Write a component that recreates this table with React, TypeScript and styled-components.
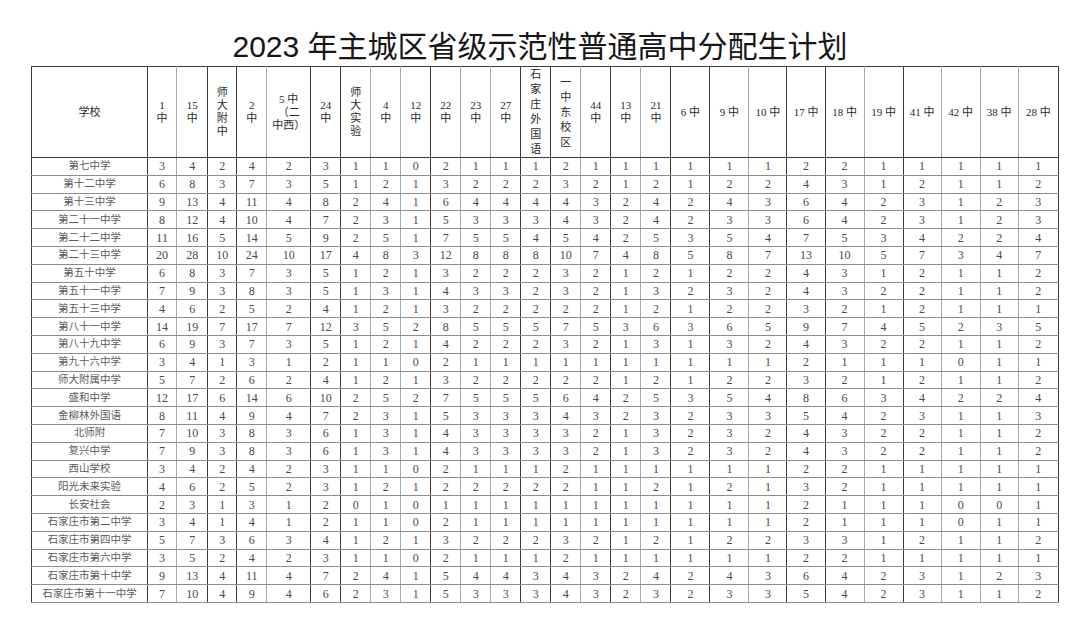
import React from "react";
import styled, { createGlobalStyle } from "styled-components";

type Tone = "dark" | "light";

interface Column {
    label: string[];
    width: number;
    edge: Tone;
    lineHeight?: number;
}

const columns: Column[] = [
    { label: ["学校"], width: 116, edge: "dark" },
    { label: ["1", "中"], width: 29, edge: "light" },
    { label: ["15", "中"], width: 31, edge: "dark" },
    { label: ["师", "大", "附", "中"], width: 29, edge: "dark" },
    { label: ["2", "中"], width: 30, edge: "light" },
    { label: ["5 中", "（二", "中西）"], width: 44, edge: "dark" },
    { label: ["24", "中"], width: 30, edge: "dark" },
    { label: ["师", "大", "实", "验"], width: 30, edge: "light" },
    { label: ["4", "中"], width: 30, edge: "light" },
    { label: ["12", "中"], width: 30, edge: "dark" },
    { label: ["22", "中"], width: 30, edge: "light" },
    { label: ["23", "中"], width: 30, edge: "light" },
    { label: ["27", "中"], width: 30, edge: "dark" },
    { label: ["石", "家", "庄", "外", "国", "语"], width: 30, edge: "dark", lineHeight: 15 },
    { label: ["一", "中", "东", "校", "区"], width: 30, edge: "light", lineHeight: 15 },
    { label: ["44", "中"], width: 30, edge: "dark" },
    { label: ["13", "中"], width: 30, edge: "light" },
    { label: ["21", "中"], width: 30, edge: "dark" },
    { label: ["6 中"], width: 39, edge: "dark" },
    { label: ["9 中"], width: 39, edge: "light" },
    { label: ["10 中"], width: 38, edge: "dark" },
    { label: ["17 中"], width: 38, edge: "dark" },
    { label: ["18 中"], width: 39, edge: "light" },
    { label: ["19 中"], width: 39, edge: "dark" },
    { label: ["41 中"], width: 38, edge: "light" },
    { label: ["42 中"], width: 39, edge: "light" },
    { label: ["38 中"], width: 38, edge: "light" },
    { label: ["28 中"], width: 40, edge: "dark" },
];

const rows: [string, number[]][] = [
    ["第七中学", [3, 4, 2, 4, 2, 3, 1, 1, 0, 2, 1, 1, 1, 2, 1, 1, 1, 1, 1, 1, 2, 2, 1, 1, 1, 1, 1]],
    ["第十二中学", [6, 8, 3, 7, 3, 5, 1, 2, 1, 3, 2, 2, 2, 3, 2, 1, 2, 1, 2, 2, 4, 3, 1, 2, 1, 1, 2]],
    ["第十三中学", [9, 13, 4, 11, 4, 8, 2, 4, 1, 6, 4, 4, 4, 4, 3, 2, 4, 2, 4, 3, 6, 4, 2, 3, 1, 2, 3]],
    ["第二十一中学", [8, 12, 4, 10, 4, 7, 2, 3, 1, 5, 3, 3, 3, 4, 3, 2, 4, 2, 3, 3, 6, 4, 2, 3, 1, 2, 3]],
    ["第二十二中学", [11, 16, 5, 14, 5, 9, 2, 5, 1, 7, 5, 5, 4, 5, 4, 2, 5, 3, 5, 4, 7, 5, 3, 4, 2, 2, 4]],
    ["第二十三中学", [20, 28, 10, 24, 10, 17, 4, 8, 3, 12, 8, 8, 8, 10, 7, 4, 8, 5, 8, 7, 13, 10, 5, 7, 3, 4, 7]],
    ["第五十中学", [6, 8, 3, 7, 3, 5, 1, 2, 1, 3, 2, 2, 2, 3, 2, 1, 2, 1, 2, 2, 4, 3, 1, 2, 1, 1, 2]],
    ["第五十一中学", [7, 9, 3, 8, 3, 5, 1, 3, 1, 4, 3, 3, 2, 3, 2, 1, 3, 2, 3, 2, 4, 3, 2, 2, 1, 1, 2]],
    ["第五十三中学", [4, 6, 2, 5, 2, 4, 1, 2, 1, 3, 2, 2, 2, 2, 2, 1, 2, 1, 2, 2, 3, 2, 1, 2, 1, 1, 1]],
    ["第八十一中学", [14, 19, 7, 17, 7, 12, 3, 5, 2, 8, 5, 5, 5, 7, 5, 3, 6, 3, 6, 5, 9, 7, 4, 5, 2, 3, 5]],
    ["第八十九中学", [6, 9, 3, 7, 3, 5, 1, 2, 1, 4, 2, 2, 2, 3, 2, 1, 3, 1, 3, 2, 4, 3, 2, 2, 1, 1, 2]],
    ["第九十六中学", [3, 4, 1, 3, 1, 2, 1, 1, 0, 2, 1, 1, 1, 1, 1, 1, 1, 1, 1, 1, 2, 1, 1, 1, 0, 1, 1]],
    ["师大附属中学", [5, 7, 2, 6, 2, 4, 1, 2, 1, 3, 2, 2, 2, 2, 2, 1, 2, 1, 2, 2, 3, 2, 1, 2, 1, 1, 2]],
    ["盛和中学", [12, 17, 6, 14, 6, 10, 2, 5, 2, 7, 5, 5, 5, 6, 4, 2, 5, 3, 5, 4, 8, 6, 3, 4, 2, 2, 4]],
    ["金柳林外国语", [8, 11, 4, 9, 4, 7, 2, 3, 1, 5, 3, 3, 3, 4, 3, 2, 3, 2, 3, 3, 5, 4, 2, 3, 1, 1, 3]],
    ["北师附", [7, 10, 3, 8, 3, 6, 1, 3, 1, 4, 3, 3, 3, 3, 2, 1, 3, 2, 3, 2, 4, 3, 2, 2, 1, 1, 2]],
    ["复兴中学", [7, 9, 3, 8, 3, 6, 1, 3, 1, 4, 3, 3, 3, 3, 2, 1, 3, 2, 3, 2, 4, 3, 2, 2, 1, 1, 2]],
    ["西山学校", [3, 4, 2, 4, 2, 3, 1, 1, 0, 2, 1, 1, 1, 2, 1, 1, 1, 1, 1, 1, 2, 2, 1, 1, 1, 1, 1]],
    ["阳光未来实验", [4, 6, 2, 5, 2, 3, 1, 2, 1, 2, 2, 2, 2, 2, 1, 1, 2, 1, 2, 1, 3, 2, 1, 1, 1, 1, 1]],
    ["长安社会", [2, 3, 1, 3, 1, 2, 0, 1, 0, 1, 1, 1, 1, 1, 1, 1, 1, 1, 1, 1, 2, 1, 1, 1, 0, 0, 1]],
    ["石家庄市第二中学", [3, 4, 1, 4, 1, 2, 1, 1, 0, 2, 1, 1, 1, 1, 1, 1, 1, 1, 1, 1, 2, 1, 1, 1, 0, 1, 1]],
    ["石家庄市第四中学", [5, 7, 3, 6, 3, 4, 1, 2, 1, 3, 2, 2, 2, 3, 2, 1, 2, 1, 2, 2, 3, 3, 1, 2, 1, 1, 2]],
    ["石家庄市第六中学", [3, 5, 2, 4, 2, 3, 1, 1, 0, 2, 1, 1, 1, 2, 1, 1, 1, 1, 1, 1, 2, 2, 1, 1, 1, 1, 1]],
    ["石家庄市第十中学", [9, 13, 4, 11, 4, 7, 2, 4, 1, 5, 4, 4, 3, 4, 3, 2, 4, 2, 4, 3, 6, 4, 2, 3, 1, 2, 3]],
    ["石家庄市第十一中学", [7, 10, 4, 9, 4, 6, 2, 3, 1, 5, 3, 3, 3, 4, 3, 2, 3, 2, 3, 3, 5, 4, 2, 3, 1, 1, 2]],
];

const GlobalStyle = createGlobalStyle`
    html, body {
        margin: 0;
        padding: 0;
        background: #fff;
    }
    body {
        font-family: "Liberation Serif", "Noto Sans CJK SC", serif;
    }
`;

const Page = styled.div`
    width: 1080px;
    height: 627px;
    overflow: hidden;
    background: #fff;
`;

const Title = styled.h1`
    margin: 0;
    height: 66px;
    padding-top: 22px;
    box-sizing: border-box;
    display: flex;
    align-items: center;
    justify-content: center;
    font-family: "Liberation Sans", "Noto Sans CJK SC", sans-serif;
    font-weight: 400;
    font-size: 30px;
    color: #161616;
`;

const Table = styled.table`
    margin-left: 31px;
    width: 1028px;
    table-layout: fixed;
    border-collapse: collapse;
    border: 1.5px solid #3a3a3a;
`;

const edgeColor = (tone: Tone) => (tone === "dark" ? "#3c3c3c" : "#a8a8a8");

const HeadCell = styled.th<{ $edge: Tone; $lh: number }>`
    height: 90px;
    padding: 0;
    border-right: 1px solid ${(p) => edgeColor(p.$edge)};
    border-bottom: 1px solid #3c3c3c;
    font-family: "Liberation Serif", "Noto Sans CJK SC", serif;
    font-weight: 400;
    font-size: 11px;
    line-height: ${(p) => p.$lh}px;
    color: #2a2a2a;
    text-align: center;
    vertical-align: middle;
    white-space: nowrap;
`;

const Line = styled.span`
    display: block;
`;

const Cell = styled.td<{ $edge: Tone; $name?: boolean }>`
    height: 16.8px;
    padding: 0;
    border-right: 1px solid ${(p) => edgeColor(p.$edge)};
    border-bottom: 1px solid #8c8c8c;
    font-family: "Liberation Serif", "Noto Sans CJK SC", serif;
    font-size: ${(p) => (p.$name ? "10.5px" : "12px")};
    line-height: 14px;
    color: ${(p) => (p.$name ? "#5a5a5a" : "#4a4a4a")};
    text-align: center;
    vertical-align: middle;
    white-space: nowrap;
    overflow: hidden;
`;

export default function App() {
    return (
        <Page>
            <GlobalStyle />
            <Title>2023 年主城区省级示范性普通高中分配生计划</Title>
            <Table>
                <colgroup>
                    {columns.map((c, i) => (
                        <col key={i} style={{ width: c.width }} />
                    ))}
                </colgroup>
                <thead>
                    <tr>
                        {columns.map((c, i) => (
                            <HeadCell key={i} $edge={c.edge} $lh={c.lineHeight ?? 13}>
                                {c.label.map((l, j) => (
                                    <Line key={j}>{l}</Line>
                                ))}
                            </HeadCell>
                        ))}
                    </tr>
                </thead>
                <tbody>
                    {rows.map(([name, values]) => (
                        <tr key={name}>
                            <Cell $edge={columns[0].edge} $name>
                                {name}
                            </Cell>
                            {values.map((v, i) => (
                                <Cell key={i} $edge={columns[i + 1].edge}>
                                    {v}
                                </Cell>
                            ))}
                        </tr>
                    ))}
                </tbody>
            </Table>
        </Page>
    );
}
